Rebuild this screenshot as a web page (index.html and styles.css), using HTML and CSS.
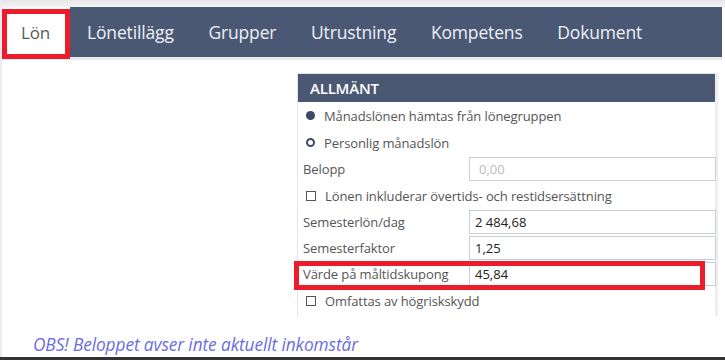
FILE: index.html
```html
<!DOCTYPE html>
<html lang="sv">
<head>
<meta charset="utf-8">
<link rel="stylesheet" href="styles.css">
</head>
<body>
<div class="page">
  <div class="topstrip"></div>
  <nav class="tabs">
    <div class="tab active">Lön</div>
    <div class="tab">Lönetillägg</div>
    <div class="tab">Grupper</div>
    <div class="tab">Utrustning</div>
    <div class="tab">Kompetens</div>
    <div class="tab">Dokument</div>
    <div class="mark mark-tab"></div>
  </nav>
  <div class="navline"></div>
  <main class="content">
    <section class="panel">
      <header class="panel-head">ALLMÄNT</header>
      <div class="row opt"><span class="radio on"></span><span class="txt">Månadslönen hämtas från lönegruppen</span></div>
      <div class="row opt"><span class="radio off"></span><span class="txt">Personlig månadslön</span></div>
      <div class="row field"><span class="lbl">Belopp</span><span class="inp placeholder">0,00</span></div>
      <div class="row opt"><span class="chk"></span><span class="txt">Lönen inkluderar övertids- och restidsersättning</span></div>
      <div class="row field"><span class="lbl">Semesterlön/dag</span><span class="inp">2 484,68</span></div>
      <div class="row field"><span class="lbl">Semesterfaktor</span><span class="inp">1,25</span></div>
      <div class="row field hl"><span class="lbl">Värde på måltidskupong</span><span class="inp">45,84</span><div class="mark mark-row"></div></div>
      <div class="row opt"><span class="chk"></span><span class="txt">Omfattas av högriskskydd</span></div>
    </section>
    <p class="note">OBS! Beloppet avser inte aktuellt inkomstår</p>
  </main>
  <div class="bottombar"></div>
</div>
</body>
</html>
```
FILE: styles.css
```css
html, body {
  margin: 0;
  padding: 0;
  background: #fff;
}
body {
  width: 725px;
  height: 360px;
  overflow: hidden;
  font-family: "Open Sans", "Noto Sans", sans-serif;
}
.page {
  height: 360px;
  display: flex;
  flex-direction: column;
  border-left: 2px solid #ececee;
  box-sizing: border-box;
}
.topstrip {
  height: 7px;
  background: linear-gradient(#e6e6e8, #f3f3f5);
}
.tabs {
  position: relative;
  height: 50px;
  display: flex;
  align-items: stretch;
  background: #4a5874;
  margin-right: 3px;
}
.tab {
  display: flex;
  align-items: center;
  padding: 0 17.3px;
  color: #eef0f6;
  font-size: 17.5px;
  letter-spacing: -0.15px;
}
.tab:nth-child(2) { padding-left: 17px; }
.tab.active {
  background: #fff;
  color: #5a5a5a;
  width: 68px;
  box-sizing: border-box;
  padding: 0 0 0 19px;
  font-size: 17px;
}
.mark {
  position: absolute;
  border: 5px solid #ec1c2a;
  box-sizing: border-box;
  pointer-events: none;
}
.mark-tab {
  left: 0;
  top: 2px;
  width: 68px;
  height: 50px;
}
.navline {
  height: 3px;
  background: #e9eaee;
  margin-right: 3px;
}
.content {
  flex: 1;
  display: flex;
  flex-direction: column;
}
.panel {
  align-self: flex-end;
  width: 421px;
  margin: 13px 7px 0 0;
  border: 1px solid #e1e4ea;
  border-right: 3px solid #eceef2;
  border-bottom: none;
  box-sizing: border-box;
  padding-bottom: 2px;
  font-size: 13px;
  color: #555;
}
.panel-head {
  height: 28px;
  background: #4a5874;
  color: #fff;
  font-size: 15px;
  font-weight: 600;
  display: flex;
  align-items: center;
  padding-left: 12px;
  letter-spacing: -0.2px;
}
.row {
  position: relative;
  height: 26px;
  display: flex;
  align-items: center;
}
.opt { height: 27px; }
.opt .txt { margin-left: 9px; letter-spacing: -0.1px; }
.radio {
  width: 9px;
  height: 9px;
  border-radius: 50%;
  margin-left: 8px;
  box-sizing: border-box;
}
.radio.on { background: #3c4866; }
.radio.off { border: 2.5px solid #3c4866; background: #fff; }
.chk {
  width: 10px;
  height: 10px;
  border: 1px solid #555;
  box-sizing: border-box;
  margin-left: 8px;
}
.lbl {
  width: 171px;
  padding-left: 5px;
  box-sizing: border-box;
  flex: none;
  letter-spacing: -0.1px;
}
.inp {
  flex: 1;
  height: 24px;
  border: 1px solid #c9cdd5;
  box-sizing: border-box;
  display: flex;
  align-items: center;
  padding-left: 5px;
  color: #222;
  margin-right: -1px;
}
.inp.placeholder {
  color: #bbb;
  padding-left: 9px;
}
.mark-row {
  left: -4px;
  top: 0px;
  width: 411px;
  height: 29px;
}
.note {
  margin: auto 0 0 31px;
  font-style: italic;
  font-size: 17.3px;
  line-height: 24px;
  color: #6a6edf;
  letter-spacing: -0.1px;
}
.bottombar {
  height: 3px;
  background: #333;
  margin-left: -2px;
}
```
